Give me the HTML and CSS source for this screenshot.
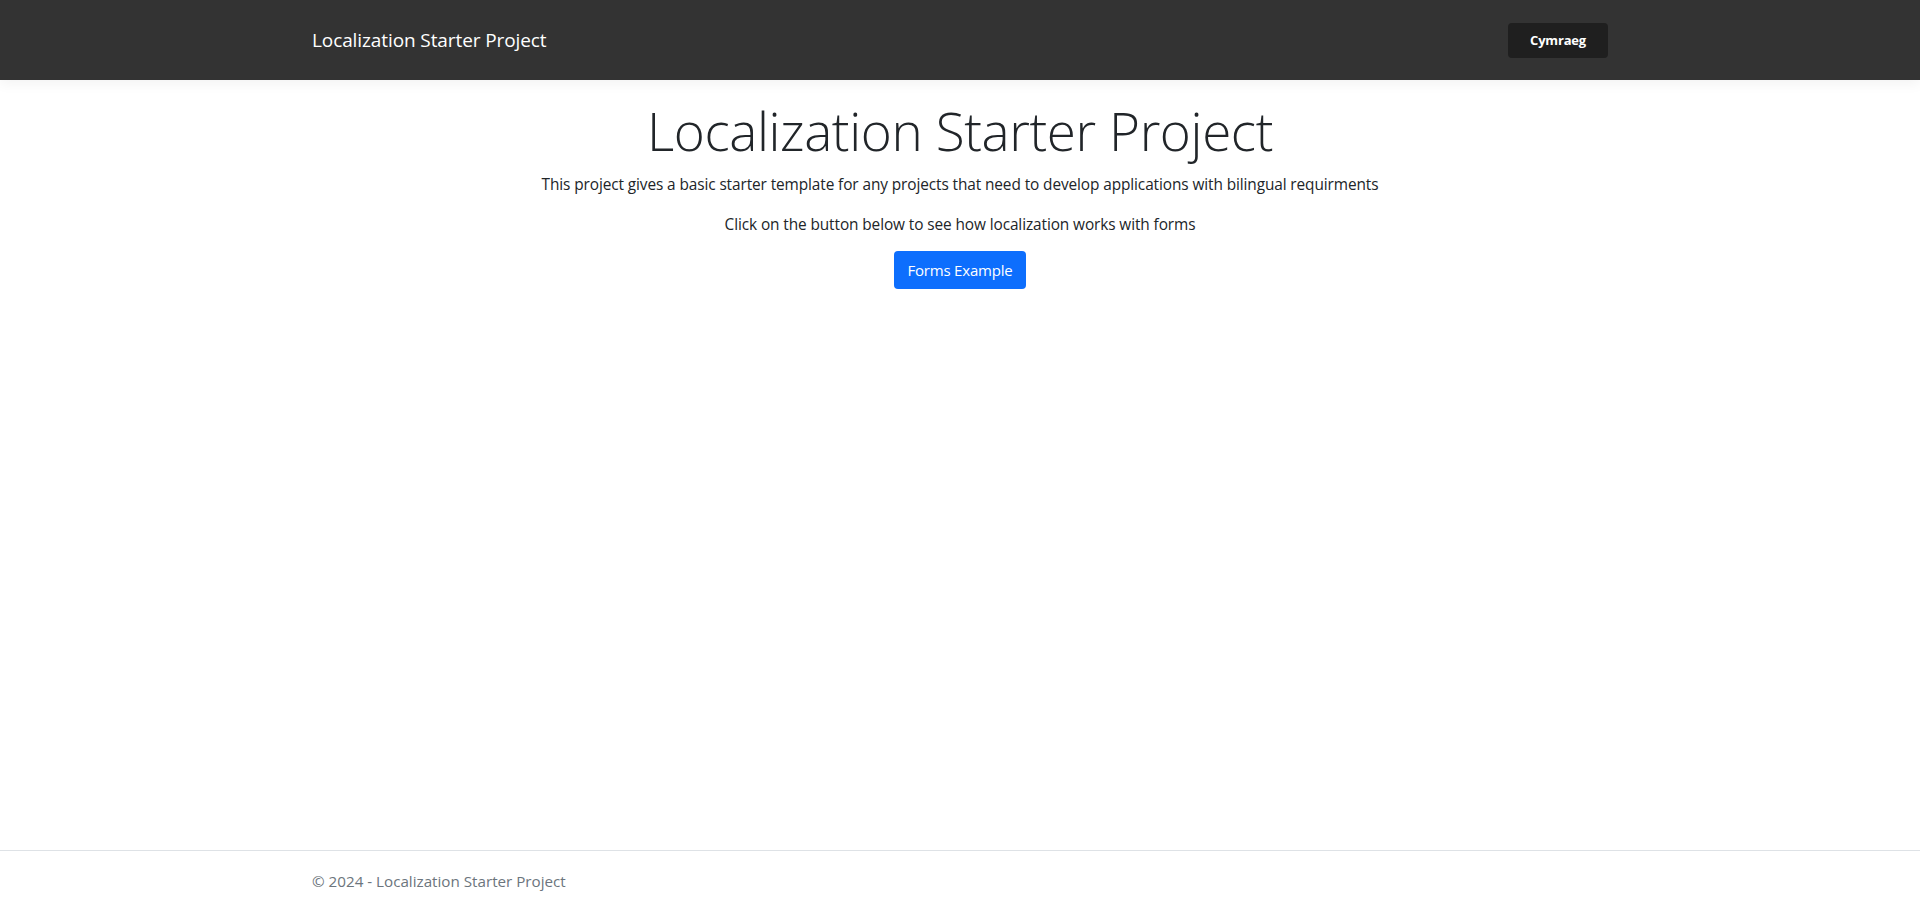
FILE: index.html
```html
<!DOCTYPE html>
<html lang="en">
<head>
<meta charset="utf-8">
<title>Localization Starter Project</title>
<link rel="stylesheet" href="styles.css">
</head>
<body>
<header class="navbar">
  <div class="container nav-inner">
    <a class="brand" href="#">Localization Starter Project</a>
    <button class="lang-btn" type="button">Cymraeg</button>
  </div>
</header>
<main class="container main">
  <div class="hero">
    <h1 class="display">Localization Starter Project</h1>
    <p class="lead-text">This project gives a basic starter template for any projects that need to develop applications with bilingual requirments</p>
    <p class="lead-text last">Click on the button below to see how localization works with forms</p>
    <a class="btn-primary" href="#">Forms Example</a>
  </div>
</main>
<footer class="footer">
  <div class="container">&copy; 2024 - Localization Starter Project</div>
</footer>
</body>
</html>
```

FILE: styles.css
```css
* { box-sizing: border-box; }
html, body { height: 100%; }
body {
  margin: 0;
  font-family: "Open Sans", "Noto Sans", sans-serif;
  font-size: 16px;
  line-height: 1.5;
  color: #212529;
  background: #fff;
  display: flex;
  flex-direction: column;
  min-height: 100vh;
}
.container {
  width: 1320px;
  margin: 0 auto;
  padding: 0 12px;
}
.navbar {
  background: #333333;
  height: 80px;
  box-shadow: 0 4px 12px rgba(0,0,0,0.05);
  margin-bottom: 16px;
}
.nav-inner {
  height: 100%;
  display: flex;
  align-items: center;
  justify-content: space-between;
}
.brand {
  color: #fff;
  text-decoration: none;
  font-size: 19px;
  line-height: 30px;
  letter-spacing: -0.1px;
}
.lang-btn {
  background: #1f1f1f;
  color: #fff;
  border: none;
  border-radius: 4px;
  width: 100px;
  height: 35px;
  font-family: inherit;
  font-weight: 700;
  font-size: 13px;
  letter-spacing: -0.2px;
  cursor: pointer;
}
.main { flex: 1 0 auto; }
.hero { text-align: center; padding-top: 3px; }
.display {
  margin: 0 0 10px;
  font-size: 53px;
  font-weight: 300;
  line-height: 1.2;
  letter-spacing: -0.4px;
}
.lead-text {
  margin: 0 0 16px;
  font-size: 15.4px;
  line-height: 24px;
  letter-spacing: -0.1px;
}
.lead-text.last { margin-bottom: 14px; }
.btn-primary {
  display: inline-block;
  background: #0d6efd;
  color: #fff;
  text-decoration: none;
  border-radius: 4px;
  padding: 7px 12px;
  font-size: 15px;
  line-height: 24px;
  width: 132px;
  height: 38px;
  letter-spacing: -0.2px;
}
.footer {
  border-top: 1px solid #dee2e6;
  height: 61px;
  line-height: 60px;
  color: #6c757d;
  font-size: 15.2px;
  white-space: nowrap;
}
```
